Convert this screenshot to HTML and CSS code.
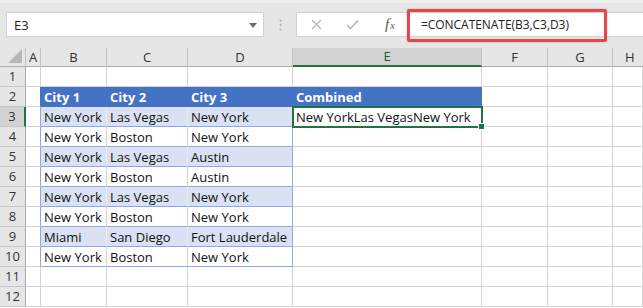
FILE: index.html
```html
<!DOCTYPE html>
<html>
<head>
<meta charset="utf-8">
<link rel="stylesheet" href="styles.css">
</head>
<body>
<div class="toolbar">
  <div class="namebox">
    <span class="ref">E3</span>
    <svg class="drop" width="8" height="5" viewBox="0 0 8 5"><polygon points="0,0 8,0 4,5" fill="#6d6d6d"/></svg>
  </div>
  <div class="dots">
    <svg width="3" height="12" viewBox="0 0 3 12"><circle cx="1.5" cy="1.5" r="1" fill="#a8a8a8"/><circle cx="1.5" cy="6" r="1" fill="#a8a8a8"/><circle cx="1.5" cy="10.5" r="1" fill="#a8a8a8"/></svg>
  </div>
  <div class="fbar">
    <div class="fbtns">
      <svg class="ico" width="11" height="11" viewBox="0 0 11 11"><path d="M1 1 L10 10 M10 1 L1 10" stroke="#b5b5b5" stroke-width="1.3" fill="none"/></svg>
      <svg class="ico" width="13" height="11" viewBox="0 0 13 11"><path d="M1 6 L4.5 9.5 L12 1.5" stroke="#b5b5b5" stroke-width="1.6" fill="none"/></svg>
      <span class="fx">f<sub>x</sub></span>
    </div>
    <div class="formula">
      <span class="ftext">=CONCATENATE(B3,C3,D3)</span>
      <div class="annot"></div>
    </div>
  </div>
</div>
<div class="sheet">
  <div class="corner"><svg width="14" height="14" viewBox="0 0 14 14"><polygon points="14,0 14,14 0,14" fill="#b7b7b7"/></svg></div>
  <div class="ch">A</div><div class="ch">B</div><div class="ch">C</div><div class="ch">D</div><div class="ch sel">E</div><div class="ch">F</div><div class="ch">G</div><div class="ch last">H</div>

  <div class="rh">1</div><div class="c"></div><div class="c"></div><div class="c"></div><div class="c"></div><div class="c"></div><div class="c"></div><div class="c"></div><div class="c"></div>

  <div class="rh">2</div><div class="c edge th0"></div><div class="c th">City 1</div><div class="c th">City 2</div><div class="c th">City 3</div><div class="c th">Combined</div><div class="c"></div><div class="c"></div><div class="c"></div>

  <div class="rh rsel">3</div><div class="c edge"></div><div class="c tb">New York</div><div class="c tb">Las Vegas</div><div class="c tb tr">New York</div><div class="c active">New YorkLas VegasNew York</div><div class="c"></div><div class="c"></div><div class="c"></div>

  <div class="rh">4</div><div class="c edge"></div><div class="c tw">New York</div><div class="c tw">Boston</div><div class="c tw tr">New York</div><div class="c"></div><div class="c"></div><div class="c"></div><div class="c"></div>

  <div class="rh">5</div><div class="c edge"></div><div class="c tb">New York</div><div class="c tb">Las Vegas</div><div class="c tb tr">Austin</div><div class="c"></div><div class="c"></div><div class="c"></div><div class="c"></div>

  <div class="rh">6</div><div class="c edge"></div><div class="c tw">New York</div><div class="c tw">Boston</div><div class="c tw tr">Austin</div><div class="c"></div><div class="c"></div><div class="c"></div><div class="c"></div>

  <div class="rh">7</div><div class="c edge"></div><div class="c tb">New York</div><div class="c tb">Las Vegas</div><div class="c tb tr">New York</div><div class="c"></div><div class="c"></div><div class="c"></div><div class="c"></div>

  <div class="rh">8</div><div class="c edge"></div><div class="c tw">New York</div><div class="c tw">Boston</div><div class="c tw tr">New York</div><div class="c"></div><div class="c"></div><div class="c"></div><div class="c"></div>

  <div class="rh">9</div><div class="c edge"></div><div class="c tb">Miami</div><div class="c tb">San Diego</div><div class="c tb tr">Fort Lauderdale</div><div class="c"></div><div class="c"></div><div class="c"></div><div class="c"></div>

  <div class="rh">10</div><div class="c edge"></div><div class="c tw">New York</div><div class="c tw">Boston</div><div class="c tw tr">New York</div><div class="c"></div><div class="c"></div><div class="c"></div><div class="c"></div>

  <div class="rh">11</div><div class="c"></div><div class="c"></div><div class="c"></div><div class="c"></div><div class="c"></div><div class="c"></div><div class="c"></div><div class="c"></div>

  <div class="rh">12</div><div class="c"></div><div class="c"></div><div class="c"></div><div class="c"></div><div class="c"></div><div class="c"></div><div class="c"></div><div class="c"></div>
</div>
</body>
</html>
```

FILE: styles.css
```css
* { box-sizing: border-box; }
html, body { margin: 0; padding: 0; }
body {
  width: 643px;
  height: 308px;
  overflow: hidden;
  background: #ffffff;
  font-family: "Open Sans", "Noto Sans", sans-serif;
  color: #1a1a1a;
}

.toolbar {
  height: 48px;
  background: #e6e6e6;
  border-top: 3px solid #eeeeee;
  padding: 9px 0 0 6px;
  display: flex;
  align-items: flex-start;
}
.namebox {
  width: 258px;
  height: 25px;
  background: #fff;
  border: 1px solid #d2d2d2;
  display: flex;
  align-items: center;
  justify-content: space-between;
  padding: 0 6px 0 7px;
}
.ref { font-size: 13px; color: #222; }
.drop { margin-top: 1px; }
.dots {
  width: 32px;
  height: 25px;
  display: flex;
  align-items: center;
  justify-content: center;
}
.fbar {
  flex: 1;
  height: 25px;
  display: flex;
  background: #fff;
  border: 1px solid #d2d2d2;
  border-right: none;
}
.fbtns {
  width: 110px;
  display: flex;
  align-items: center;
  padding-left: 14px;
  gap: 24px;
}
.fx {
  font-family: "Liberation Serif", "DejaVu Serif", serif;
  font-style: italic;
  font-size: 15px;
  color: #555;
  margin-left: 2px;
  line-height: 1;
}
.fx sub { font-size: 10px; vertical-align: 0; margin-left: 1px; }
.formula {
  flex: 1;
  position: relative;
  display: flex;
  align-items: center;
  padding-left: 14px;
}
.ftext { font-size: 12px; color: #222; letter-spacing: -0.05px; }
.annot {
  position: absolute;
  left: 0;
  top: -4px;
  width: 200px;
  height: 33px;
  border: 3px solid #e8474a;
  border-radius: 2px;
  box-shadow: 0 0 2px rgba(0,0,0,0.25);
}

.sheet {
  display: grid;
  grid-template-columns: 26px 15px 66px 81px 105px 189px 66px 65px 30px;
  grid-template-rows: 19px repeat(12, 20px);
}
.corner {
  background: #e6e6e6;
  border-right: 1px solid #c2c2c2;
  border-bottom: 1px solid #ababab;
  display: flex;
  align-items: flex-end;
  justify-content: flex-end;
  padding: 0 3px 3px 0;
}
.ch {
  background: #e6e6e6;
  border-right: 1px solid #c2c2c2;
  border-bottom: 1px solid #ababab;
  font-size: 13px;
  color: #333;
  display: flex;
  align-items: center;
  justify-content: center;
  line-height: 1;
}
.ch.last { justify-content: flex-start; padding-left: 12px; border-right: none; }
.ch.sel {
  background: #d2d2d2;
  border-bottom: 2px solid #217346;
  color: #1c5a38;
}
.rh {
  background: #e6e6e6;
  border-right: 1px solid #ababab;
  border-bottom: 1px solid #c8c8c8;
  font-size: 13px;
  color: #333;
  display: flex;
  align-items: center;
  justify-content: center;
  line-height: 1;
}
.rh.rsel {
  background: #d2d2d2;
  border-right: 2px solid #217346;
}
.c {
  border-right: 1px solid #d4d4d4;
  border-bottom: 1px solid #d4d4d4;
  font-size: 13px;
  line-height: 1;
  display: flex;
  align-items: center;
  padding: 1px 0 0 3px;
  white-space: nowrap;
  overflow: visible;
  color: #111;
}
.c.edge { border-right-color: #8ea9db; }
.c.edge.th0 { border-right-color: #4472c4; }
.c.th {
  background: #4472c4;
  color: #fff;
  font-weight: 700;
  border-right-color: #4472c4;
  border-bottom-color: #4472c4;
}
.c.tb {
  background: #d9e1f2;
  border-bottom-color: #8ea9db;
  border-right-color: #e6ebf6;
}
.c.tw {
  border-bottom-color: #8ea9db;
}
.c.tr { border-right-color: #8ea9db; }
.c.active { position: relative; }
.c.active::after {
  content: "";
  position: absolute;
  left: -1px;
  top: -1px;
  right: -2px;
  bottom: -2px;
  border: 2px solid #217346;
}
.c.active::before {
  content: "";
  position: absolute;
  right: -4px;
  bottom: -4px;
  width: 5px;
  height: 5px;
  background: #217346;
  border: 1px solid #fff;
  z-index: 2;
}
```
